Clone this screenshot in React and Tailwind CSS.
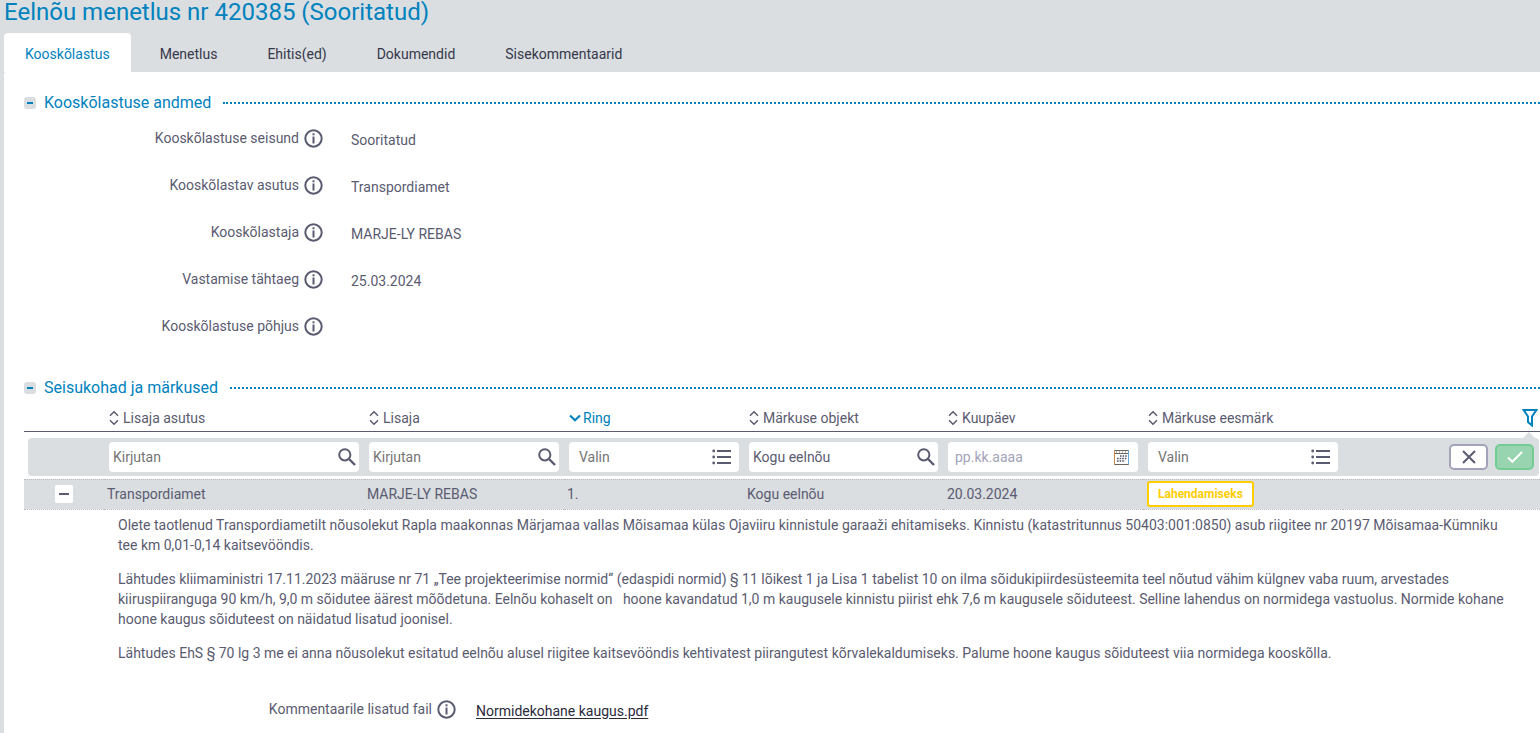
import { useState } from 'react';

const tabs = ['Kooskõlastus', 'Menetlus', 'Ehitis(ed)', 'Dokumendid', 'Sisekommentaarid'];

const details = [
  { label: 'Kooskõlastuse seisund', value: 'Sooritatud' },
  { label: 'Kooskõlastav asutus', value: 'Transpordiamet' },
  { label: 'Kooskõlastaja', value: 'MARJE-LY REBAS' },
  { label: 'Vastamise tähtaeg', value: '25.03.2024' },
  { label: 'Kooskõlastuse põhjus', value: '' },
];

const columns = ['Lisaja asutus', 'Lisaja', 'Ring', 'Märkuse objekt', 'Kuupäev', 'Märkuse eesmärk'];

const InfoButton = ({ topic }) => (
  <button type="button" aria-label={`Info: ${topic}`} className="shrink-0 cursor-pointer">
    <svg className="block size-[19px]" viewBox="0 0 19 19" fill="none" stroke="currentColor">
      <circle cx="9.5" cy="9.5" r="8.2" strokeWidth="2" />
      <path d="M9.5 7.5v7" strokeWidth="2" />
      <path d="M9.5 4.3v2" strokeWidth="2" />
    </svg>
  </button>
);

const SortIcon = ({ active }) =>
  active ? (
    <svg className="h-4 w-3 shrink-0" viewBox="0 0 12 16" fill="none" stroke="currentColor" strokeWidth="2.2">
      <path d="M1 5.5l5 4.8 5-4.8" />
    </svg>
  ) : (
    <svg className="h-4 w-[10px] shrink-0" viewBox="0 0 10 16" fill="none" stroke="currentColor" strokeWidth="1.5">
      <path d="M1 5.7L5 1.7l4 4" />
      <path d="M1 10.3l4 4 4-4" />
    </svg>
  );

const SearchIcon = () => (
  <svg className="size-[18px]" viewBox="0 0 18 18" fill="none" stroke="currentColor">
    <circle cx="6.8" cy="6.8" r="5.6" strokeWidth="2" />
    <path d="M11 11l6 6" strokeWidth="2.4" />
  </svg>
);

const ListIcon = () => (
  <svg className="h-4 w-5" viewBox="0 0 20 16" fill="currentColor">
    <path d="M5 1h14v2H5zM5 7h14v2H5zM5 13h14v2H5z" />
    <circle cx="1.7" cy="2" r="1.4" />
    <circle cx="1.7" cy="8" r="1.4" />
    <circle cx="1.7" cy="14" r="1.4" />
  </svg>
);

const CalendarIcon = () => (
  <svg className="size-[15px]" viewBox="0 0 15 15" fill="none">
    <path d="M.5 .5h14v14H.5z" stroke="#6b6259" />
    <path d="M.5 .5v14" stroke="#c98a45" />
    <path d="M14.5 .5v14" stroke="#6aa5d8" />
    <path d="M1 3.5h13" stroke="#6b6259" />
    <path d="M2 2h11" stroke="#6b6259" strokeDasharray="1 2" />
    <path d="M6 6h7M3 8.5h10M3 11h8" stroke="#55566b" strokeWidth="1.5" strokeDasharray="1.6 1" />
  </svg>
);

const SectionHeading = ({ title, open, onToggle }) => (
  <div className="flex h-6 items-center">
    <button
      type="button"
      onClick={onToggle}
      aria-label={title}
      aria-expanded={open}
      className="flex size-3 items-center justify-center rounded-[3px] bg-[#dadee1]"
    >
      <span className="h-[2px] w-[6px] bg-[#0082be]" />
    </button>
    <h2 className="ml-2 text-base text-[#0082be]">{title}</h2>
    <div className="ml-3 flex-1 border-t-2 border-dotted border-[#0082be]" />
  </div>
);

const SearchField = ({ label, defaultValue }) => (
  <div className="flex h-[30px] items-center rounded-sm bg-white pr-[3px] pl-1">
    <input
      type="text"
      aria-label={label}
      placeholder="Kirjutan"
      defaultValue={defaultValue}
      className="w-full min-w-0 flex-1 outline-none placeholder:text-[#757575]"
    />
    <button type="button" aria-label="Otsi">
      <SearchIcon />
    </button>
  </div>
);

const SelectField = ({ label }) => (
  <div className="relative h-[30px] rounded-sm bg-white">
    <select aria-label={label} className="h-full w-full appearance-none pl-[10px] text-[#757575] outline-none">
      <option>Valin</option>
    </select>
    <span className="pointer-events-none absolute top-[7px] right-[7px]">
      <ListIcon />
    </span>
  </div>
);

const DateField = ({ label }) => (
  <div className="flex h-[30px] items-center rounded-sm bg-white pr-[9px] pl-[7px]">
    <input
      type="text"
      aria-label={label}
      placeholder="pp.kk.aaaa"
      className="w-full min-w-0 flex-1 outline-none placeholder:text-[#a2a3b8]"
    />
    <button type="button" aria-label="Kalender" className="pt-[2px]">
      <CalendarIcon />
    </button>
  </div>
);

const FilterCell = ({ children }) => (
  <td className="pt-[6px] pb-[3px]">
    <div className="h-[38px] bg-[#dadee1] px-[5px] py-1">{children}</div>
  </td>
);

const RemarksTable = () => {
  const [expanded, setExpanded] = useState(true);

  return (
    <table className="w-full table-fixed border-collapse text-left">
      <colgroup>
        <col className="w-20" />
        <col className="w-[260px]" />
        <col className="w-[200px]" />
        <col className="w-[180px]" />
        <col className="w-[199px]" />
        <col className="w-[200px]" />
        <col className="w-[200px]" />
        <col />
      </colgroup>
      <thead>
        <tr className="h-[31px] border-b border-[#5a5b70]">
          <td />
          {columns.map((name) => (
            <th key={name} className="pt-[5px] pb-0 pl-[5px] font-normal">
              <button
                type="button"
                className={`flex items-center ${name === 'Ring' ? 'gap-[2px] text-[#0082be]' : 'gap-1'}`}
              >
                <SortIcon active={name === 'Ring'} />
                {name}
              </button>
            </th>
          ))}
          <td className="relative pt-[5px]">
            <button type="button" aria-label="Filter" className="ml-auto block w-[18px] text-[#0082be]">
              <svg className="block h-[18px] w-4" viewBox="0 0 16 18" fill="none" stroke="currentColor" strokeWidth="2">
                <path d="M1.6 1h12.8L10 7.5v9L6 13V7.5z" />
              </svg>
            </button>
            {/* pointer from the filter row up to the funnel */}
            <svg className="absolute right-[5px] -bottom-[7px] h-[6px] w-3" viewBox="0 0 12 6" fill="#dadee1">
              <path d="M6 0l6 6H0z" />
            </svg>
          </td>
        </tr>
        <tr>
          <td className="pt-[6px] pb-[3px] pl-1">
            <div className="h-[38px] rounded-l bg-[#dadee1]" />
          </td>
          <FilterCell>
            <SearchField label="Lisaja asutus" />
          </FilterCell>
          <FilterCell>
            <SearchField label="Lisaja" />
          </FilterCell>
          <FilterCell>
            <SelectField label="Ring" />
          </FilterCell>
          <FilterCell>
            <SearchField label="Märkuse objekt" defaultValue="Kogu eelnõu" />
          </FilterCell>
          <FilterCell>
            <DateField label="Kuupäev" />
          </FilterCell>
          <FilterCell>
            <SelectField label="Märkuse eesmärk" />
          </FilterCell>
          <td className="pt-[6px] pr-px pb-[3px]">
            <div className="flex h-[38px] items-center justify-end gap-[7px] rounded-r bg-[#dadee1] pr-[5px]">
              <button
                type="button"
                aria-label="Tühjenda"
                className="flex h-[26px] w-[39px] items-center justify-center rounded-[5px] border-2 border-[#a2a3b8] bg-white"
              >
                <svg className="size-[14px]" viewBox="0 0 14 14" stroke="currentColor" strokeWidth="2">
                  <path d="M1 1l12 12M13 1L1 13" />
                </svg>
              </button>
              <button
                type="button"
                aria-label="Kinnita"
                className="flex h-[26px] w-[39px] items-center justify-center rounded-[5px] border-2 border-[#73cc94] bg-[#98d4b0] text-white"
              >
                <svg className="h-3 w-4" viewBox="0 0 16 12" fill="none" stroke="currentColor" strokeWidth="2">
                  <path d="M1 6.5l4.3 4.3L15 1" />
                </svg>
              </button>
            </div>
          </td>
        </tr>
      </thead>
      <tbody>
        <tr className="h-[30px] border-y border-dotted border-[#b9bbc2] bg-[#dadee1]">
          <td>
            <button
              type="button"
              onClick={() => setExpanded(!expanded)}
              aria-label="Ava või sulge"
              aria-expanded={expanded}
              className="mx-auto flex size-[18px] items-center justify-center rounded-[2px] bg-white"
            >
              <span className="h-[2px] w-[10px] bg-[#5a5b70]" />
            </button>
          </td>
          <td className="pl-[3px]">Transpordiamet</td>
          <td className="pl-[3px]">MARJE-LY REBAS</td>
          <td className="pl-[3px]">1.</td>
          <td className="pl-[3px]">Kogu eelnõu</td>
          <td className="pl-1">20.03.2024</td>
          <td className="pl-1">
            <span className="flex h-[26px] w-fit items-center rounded-[3px] border-2 border-[#ffcd00] bg-white px-[9px] text-xs font-bold text-[#ffcd00]">
              Lahendamiseks
            </span>
          </td>
          <td />
        </tr>
        {expanded && (
          <tr>
            <td colSpan="8" className="pt-[5px] pr-5 pl-[94px]">
              <div className="space-y-[14px]">
                <p>
                  Olete taotlenud Transpordiametilt nõusolekut Rapla maakonnas Märjamaa vallas Mõisamaa külas Ojaviiru
                  kinnistule garaaži ehitamiseks. Kinnistu (katastritunnus 50403:001:0850) asub riigitee nr 20197
                  Mõisamaa-Kümniku tee km 0,01-0,14 kaitsevööndis.
                </p>
                <p>
                  Lähtudes kliimaministri 17.11.2023 määruse nr 71 „Tee projekteerimise normid“ (edaspidi normid) § 11
                  lõikest 1 ja Lisa 1 tabelist 10 on ilma sõidukipiirdesüsteemita teel nõutud vähim külgnev vaba ruum,
                  arvestades kiiruspiiranguga 90 km/h, 9,0 m sõidutee äärest mõõdetuna. Eelnõu kohaselt
                  on&nbsp;&nbsp; hoone kavandatud 1,0 m kaugusele kinnistu piirist ehk 7,6 m kaugusele sõiduteest.
                  Selline lahendus on normidega vastuolus. Normide kohane hoone kaugus sõiduteest on näidatud lisatud
                  joonisel.
                </p>
                <p>
                  Lähtudes EhS § 70 lg 3 me ei anna nõusolekut esitatud eelnõu alusel riigitee kaitsevööndis kehtivatest
                  piirangutest kõrvalekaldumiseks. Palume hoone kaugus sõiduteest viia normidega kooskõlla.
                </p>
              </div>
              <div className="mt-9 flex items-center">
                <div className="flex w-[338px] items-center justify-end gap-[5px]">
                  <span className="pb-[2px]">Kommentaarile lisatud fail</span>
                  <InfoButton topic="Kommentaarile lisatud fail" />
                </div>
                <a href="#fail" className="ml-5 pt-[2px] text-[#2b2b3c] underline underline-offset-2">
                  Normidekohane kaugus.pdf
                </a>
              </div>
            </td>
          </tr>
        )}
      </tbody>
    </table>
  );
};

const App = () => {
  const [activeTab, setActiveTab] = useState('Kooskõlastus');
  const [showDetails, setShowDetails] = useState(true);
  const [showRemarks, setShowRemarks] = useState(true);

  return (
    <div className="flex min-h-screen flex-col bg-[#dadee1] pl-1 font-['Roboto',sans-serif] text-sm text-[#5a5b70]">
      <h1 className="h-[33px] text-2xl leading-6 text-[#0082be]">Eelnõu menetlus nr 420385 (Sooritatud)</h1>
      <nav className="flex gap-2">
        {tabs.map((tab) => (
          <button
            key={tab}
            type="button"
            onClick={() => setActiveTab(tab)}
            className={`h-[39px] rounded-t px-[21px] pt-[2px] ${
              tab === activeTab ? 'bg-white text-[#0082be]' : 'text-[#36374a]'
            }`}
          >
            {tab}
          </button>
        ))}
      </nav>

      <main className="flex-1 rounded-tl-[2px] bg-white pt-[19px] pl-5">
        <section>
          <SectionHeading
            title="Kooskõlastuse andmed"
            open={showDetails}
            onToggle={() => setShowDetails(!showDetails)}
          />
          {showDetails && (
            <dl className="pb-[26px]">
              {details.map((row) => (
                <div key={row.label} className="flex h-[47px] items-center">
                  <dt className="flex w-[299px] items-center justify-end gap-[5px]">
                    <span className="pb-[2px]">{row.label}</span>
                    <InfoButton topic={row.label} />
                  </dt>
                  <dd className="ml-7 pt-[2px]">{row.value}</dd>
                </div>
              ))}
            </dl>
          )}
        </section>

        <section>
          <SectionHeading
            title="Seisukohad ja märkused"
            open={showRemarks}
            onToggle={() => setShowRemarks(!showRemarks)}
          />
          {showRemarks && <RemarksTable />}
        </section>
      </main>
    </div>
  );
};

export default App;
